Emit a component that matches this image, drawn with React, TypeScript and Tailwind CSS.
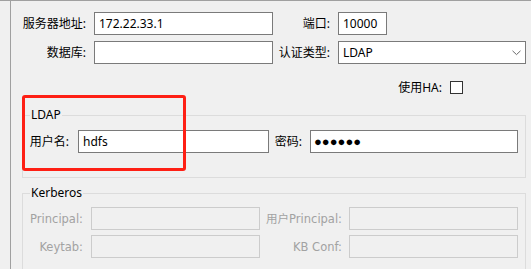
import React from "react";

function Field({ w, value, className = "" }: { w: string; value?: string; className?: string }) {
  return (
    <div className={`${w} h-[23px] shrink-0 border border-[#7a7a7a] bg-white flex items-center pl-[4px] ${className}`}>
      {value}
    </div>
  );
}

function Disabled({ w, className = "" }: { w: string; className?: string }) {
  return <div className={`${w} h-[23px] shrink-0 border border-[#cccccc] bg-[#f0f0f0] ${className}`} />;
}

const dis = "shrink-0 text-right text-[#a2a2a2] font-['DejaVu_Sans','Noto_Sans_CJK_SC',sans-serif] text-[11.5px]";

export default function App() {
  return (
    <div className="relative w-[531px] h-[269px] overflow-hidden bg-[#f0f0f0] border-t border-[#a0a0a0] font-['Noto_Sans','Noto_Sans_CJK_SC',sans-serif] text-[12px] leading-[16px] text-black">
      <div className="ml-[10px] h-full border-l border-[#a0a0a0] pl-[11px] pt-[11px]">
        <div className="flex items-center h-[23px]">
          <span className="w-[64px] shrink-0 text-right">服务器地址:</span>
          <Field w="w-[179px]" className="ml-[8px]" value="172.22.33.1" />
          <span className="w-[57px] shrink-0 text-right">端口:</span>
          <Field w="w-[49px]" className="ml-[8px]" value="10000" />
        </div>
        <div className="flex items-center h-[23px] mt-[6px]">
          <span className="w-[64px] shrink-0 text-right">数据库:</span>
          <Field w="w-[179px]" className="ml-[8px]" />
          <span className="w-[57px] shrink-0 text-right">认证类型:</span>
          <div className="ml-[8px] w-[188px] h-[23px] shrink-0 border border-[#7a7a7a] bg-white flex items-center justify-between pl-[4px] pr-[4px]">
            <span>LDAP</span>
            <svg width="9" height="6" viewBox="0 0 9 6" className="mt-[1px]">
              <path d="M0.5 0.8 L4.5 4.6 L8.5 0.8" fill="none" stroke="#6a6a6a" strokeWidth="1" />
            </svg>
          </div>
        </div>
        <div className="flex items-center h-[13px] mt-[17px]">
          <span className="ml-[360px] w-[60px] shrink-0 text-right">使用HA:</span>
          <div className="ml-[8px] w-[13px] h-[13px] shrink-0 border border-[#333333] bg-white" />
        </div>

        <fieldset className="mt-[13px] w-[504px] border border-[#dcdcdc] pb-[24px]">
          <legend className="ml-[7px] px-[1px]">LDAP</legend>
          <div className="flex items-center h-[23px] mt-[7px]">
            <span className="w-[46px] shrink-0 text-right">用户名:</span>
            <Field w="w-[191px]" className="ml-[9px]" value="hdfs" />
            <span className="w-[33px] shrink-0 text-right">密码:</span>
            <div className="ml-[8px] w-[208px] h-[23px] shrink-0 border border-[#7a7a7a] bg-white flex items-center pl-[3px] font-['Liberation_Sans',sans-serif] text-[13px]">
              ●●●●●●
            </div>
          </div>
        </fieldset>

        <fieldset className="mt-[7px] w-[504px] border border-[#dcdcdc] pb-[24px]">
          <legend className="ml-[7px] px-[1px]">Kerberos</legend>
          <div className="flex items-center h-[23px] mt-[6px]">
            <span className={`w-[60px] ${dis}`}>Principal:</span>
            <Disabled w="w-[169px]" className="ml-[8px]" />
            <span className={`w-[82px] ${dis}`}>用户Principal:</span>
            <Disabled w="w-[169px]" className="ml-[7px]" />
          </div>
          <div className="flex items-center h-[23px] mt-[5px]">
            <span className={`w-[60px] ${dis}`}>Keytab:</span>
            <Disabled w="w-[169px]" className="ml-[8px]" />
            <span className={`w-[82px] ${dis}`}>KB Conf:</span>
            <Disabled w="w-[169px]" className="ml-[7px]" />
          </div>
        </fieldset>
      </div>
      <div className="absolute left-[22px] top-[94px] w-[164px] h-[76px] border-[3px] border-[#fe1f14] rounded-[3px]" />
    </div>
  );
}
